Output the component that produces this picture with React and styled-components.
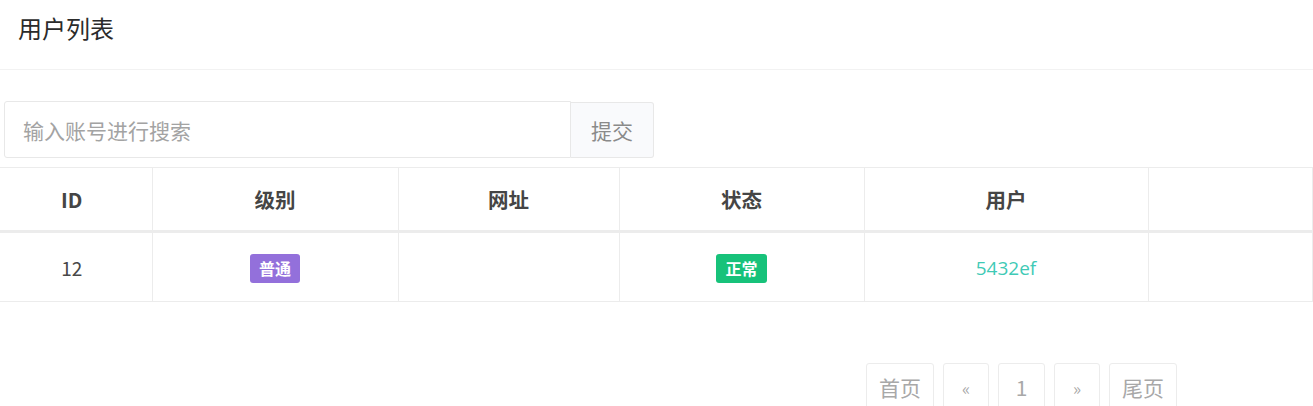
import React from "react";
import styled, { createGlobalStyle } from "styled-components";

const GlobalStyle = createGlobalStyle`
  body {
    margin: 0;
    background: #fff;
    font-family: "Open Sans", "Noto Sans CJK SC", sans-serif;
    color: #333;
  }
`;

const Page = styled.div`
  width: 100%;
  overflow: hidden;
`;

const Header = styled.div`
  height: 69px;
  padding: 0 18px;
  display: flex;
  align-items: center;
  border-bottom: 1px solid #f2f2f2;

  h1 {
    margin: 0 0 14px;
    font-size: 24px;
    font-weight: 400;
    color: #2b2b2b;
    font-family: "Noto Sans CJK SC", sans-serif;
  }
`;

const SearchBar = styled.form`
  display: flex;
  margin: 31px 0 0 4px;
  height: 57px;
`;

const SearchInput = styled.input`
  width: 567px;
  box-sizing: border-box;
  border: 1px solid #e8e8e8;
  border-radius: 3px 0 0 3px;
  padding: 0 18px;
  font-size: 21px;
  font-family: "Noto Sans CJK SC", sans-serif;
  color: #333;
  outline: none;

  &::placeholder {
    color: #a3a3a3;
  }
`;

const SubmitButton = styled.button`
  width: 83px;
  margin-top: 1px;
  box-sizing: border-box;
  border: 1px solid #e8e8e8;
  border-left: none;
  border-radius: 0 3px 3px 0;
  background: #f9fafc;
  font-size: 21px;
  color: #8a8a8a;
  font-family: "Noto Sans CJK SC", sans-serif;
`;

const Table = styled.table`
  margin-top: 9px;
  width: 100%;
  border-collapse: collapse;
  table-layout: fixed;
  font-family: "Noto Sans CJK SC", sans-serif;
`;

const Th = styled.th`
  height: 62px;
  border-top: 1px solid #ececec;
  border-right: 1px solid #ececec;
  border-bottom: 3px solid #ececec;
  font-size: 20.5px;
  font-weight: 700;
  color: #454545;
  text-align: center;
  padding: 0 ${(p) => (p.$first ? 8 : 0)}px 0 0;
`;

const Td = styled.td`
  height: 68px;
  border-right: 1px solid #ececec;
  border-bottom: 1px solid #ececec;
  text-align: center;
  font-size: 19px;
  color: #484848;
  padding: 0 ${(p) => (p.$first ? 8 : 0)}px 0 0;
`;

const Badge = styled.span`
  display: inline-block;
  padding: 0 9px;
  height: 29px;
  line-height: 29px;
  margin-top: 2px;
  border-radius: 3px;
  font-size: 16px;
  font-weight: 700;
  color: #fff;
  background: ${(p) => (p.$tone === "green" ? "#17c27a" : "#9370db")};
`;

const UserLink = styled.span`
  color: #3fcab6;
  font-family: "Open Sans", sans-serif;
`;

const Pager = styled.div`
  display: flex;
  justify-content: flex-end;
  gap: 9px;
  margin-top: 61px;
  padding-right: 136px;
`;

const PageButton = styled.span`
  box-sizing: border-box;
  height: 48px;
  min-width: ${(p) => p.$w}px;
  display: flex;
  align-items: center;
  justify-content: center;
  border: 1px solid #ececec;
  border-radius: 3px;
  color: #a8a8a8;
  font-size: ${(p) => (p.$small ? 17 : 21)}px;
  font-family: "Noto Sans CJK SC", sans-serif;
`;

const columns = [
  { title: "ID", w: 152 },
  { title: "级别", w: 246 },
  { title: "网址", w: 221 },
  { title: "状态", w: 245 },
  { title: "用户", w: 284 },
  { title: "", w: null },
];

export default function App() {
  return (
    <Page>
      <GlobalStyle />
      <Header>
        <h1>用户列表</h1>
      </Header>
      <SearchBar onSubmit={(e) => e.preventDefault()}>
        <SearchInput placeholder="输入账号进行搜索" />
        <SubmitButton type="submit">提交</SubmitButton>
      </SearchBar>
      <Table>
        <colgroup>
          {columns.map((c, i) => (
            <col key={i} style={c.w ? { width: c.w } : undefined} />
          ))}
        </colgroup>
        <thead>
          <tr>
            {columns.map((c, i) => (
              <Th key={i} $first={i === 0}>
                {c.title}
              </Th>
            ))}
          </tr>
        </thead>
        <tbody>
          <tr>
            <Td $first>12</Td>
            <Td>
              <Badge>普通</Badge>
            </Td>
            <Td />
            <Td>
              <Badge $tone="green">正常</Badge>
            </Td>
            <Td>
              <UserLink>5432ef</UserLink>
            </Td>
            <Td />
          </tr>
        </tbody>
      </Table>
      <Pager>
        <PageButton $w={68}>首页</PageButton>
        <PageButton $w={46} $small>«</PageButton>
        <PageButton $w={47}>1</PageButton>
        <PageButton $w={46} $small>»</PageButton>
        <PageButton $w={68}>尾页</PageButton>
      </Pager>
    </Page>
  );
}
